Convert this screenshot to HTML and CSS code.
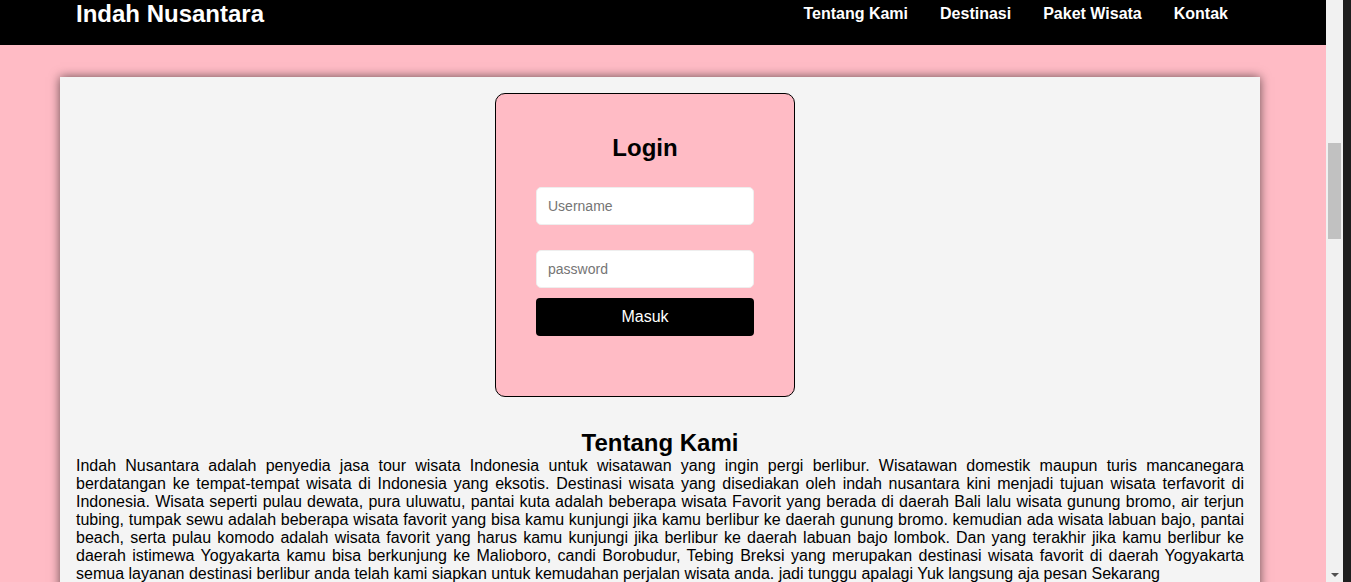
FILE: index.html
```html
<!DOCTYPE html>
<html lang="id">
<head>
    <meta charset="UTF-8">
    <meta name="viewport" content="width=device-width, initial-scale=1.0">
    <title>Indah Nusantara</title>
    <link rel="stylesheet" href="styles.css">
</head>
<body>
    <div class="page">
        <header>
            <h1>Indah Nusantara</h1>
            <nav>
                <ul>
                    <li><a href="#tentang">Tentang Kami</a></li>
                    <li><a href="#destinasi">Destinasi</a></li>
                    <li><a href="#paket">Paket Wisata</a></li>
                    <li><a href="#kontak">Kontak</a></li>
                </ul>
            </nav>
        </header>
        <main>
            <div class="card">
                <form class="login">
                    <h2>Login</h2>
                    <input type="text" placeholder="Username">
                    <input type="password" placeholder="password">
                    <button type="button">Masuk</button>
                </form>
                <section id="tentang">
                    <h2>Tentang Kami</h2>
                    <p>Indah Nusantara adalah penyedia jasa tour wisata Indonesia untuk wisatawan yang ingin pergi berlibur. Wisatawan domestik maupun turis mancanegara berdatangan ke tempat-tempat wisata di Indonesia yang eksotis. Destinasi wisata yang disediakan oleh indah nusantara kini menjadi tujuan wisata terfavorit di Indonesia. Wisata seperti pulau dewata, pura uluwatu, pantai kuta adalah beberapa wisata Favorit yang berada di daerah Bali lalu wisata gunung bromo, air terjun tubing, tumpak sewu adalah beberapa wisata favorit yang bisa kamu kunjungi jika kamu berlibur ke daerah gunung bromo. kemudian ada wisata labuan bajo, pantai beach, serta pulau komodo adalah wisata favorit yang harus kamu kunjungi jika berlibur ke daerah labuan bajo lombok. Dan yang terakhir jika kamu berlibur ke daerah istimewa Yogyakarta kamu bisa berkunjung ke Malioboro, candi Borobudur, Tebing Breksi yang merupakan destinasi wisata favorit di daerah Yogyakarta semua layanan destinasi berlibur anda telah kami siapkan untuk kemudahan perjalan wisata anda. jadi tunggu apalagi Yuk langsung aja pesan Sekarang</p>
                </section>
            </div>
        </main>
    </div>
    <div class="scrollbar">
        <div class="thumb"></div>
        <div class="arrow-down"></div>
    </div>
    <div class="edge"></div>
</body>
</html>
```

FILE: styles.css
```css
html, body {
    height: 100%;
}

body {
    margin: 0;
    display: flex;
    overflow: hidden;
    font-family: "Liberation Sans", Arial, sans-serif;
    background-color: pink;
}

.page {
    flex: 1;
    overflow: hidden;
    background-color: #ffbbc5;
}

header {
    background-color: black;
    color: white;
    height: 45px;
    display: flex;
    justify-content: space-between;
    align-items: flex-start;
    padding: 0 98px 0 76px;
}

header h1 {
    margin: 0;
    font-size: 24px;
    line-height: 28px;
}

header ul {
    list-style: none;
    display: flex;
    gap: 32px;
    margin: 5px 0 0;
    padding: 0;
}

header a {
    color: white;
    text-decoration: none;
    font-weight: bold;
    font-size: 16px;
    line-height: 18px;
}

main {
    padding-top: 32px;
}

.card {
    width: 1168px;
    margin-left: 60px;
    padding: 16px;
    background-color: #f4f4f4;
    box-shadow: 0 0 10px rgba(0, 0, 0, 0.6);
}

.login {
    width: 218px;
    height: 222px;
    margin-left: 419px;
    padding: 40px;
    display: flex;
    flex-direction: column;
    background-color: #ffbbc5;
    border: 1px solid black;
    border-radius: 10px;
}

.login h2 {
    margin: 0 0 25px;
    font-size: 24px;
    line-height: 28px;
    text-align: center;
}

.login input {
    height: 38px;
    box-sizing: border-box;
    padding: 0 11px;
    margin-bottom: 25px;
    border: 1px solid #eeeeee;
    border-radius: 5px;
    background-color: white;
    font-family: "Liberation Sans", Arial, sans-serif;
    font-size: 14px;
}

.login input:nth-of-type(2) {
    margin-bottom: 10px;
}

.login button {
    height: 38px;
    border: none;
    border-radius: 4px;
    background-color: black;
    color: white;
    font-family: "Liberation Sans", Arial, sans-serif;
    font-size: 16px;
    cursor: pointer;
}

section h2 {
    margin: 32px 0 0;
    font-size: 24px;
    line-height: 28px;
    text-align: center;
}

section p {
    margin: 0;
    font-size: 16px;
    text-align: justify;
}

.scrollbar {
    width: 17px;
    background-color: #f1f1f1;
    display: flex;
    flex-direction: column;
    align-items: center;
}

.thumb {
    width: 13px;
    height: 96px;
    margin-top: 143px;
    background-color: #c1c1c1;
}

.arrow-down {
    margin-top: auto;
    margin-bottom: 5px;
    width: 0;
    height: 0;
    border-left: 4px solid transparent;
    border-right: 4px solid transparent;
    border-top: 4px solid #505050;
}

.edge {
    width: 8px;
    background-color: #1e1e1e;
}
```
